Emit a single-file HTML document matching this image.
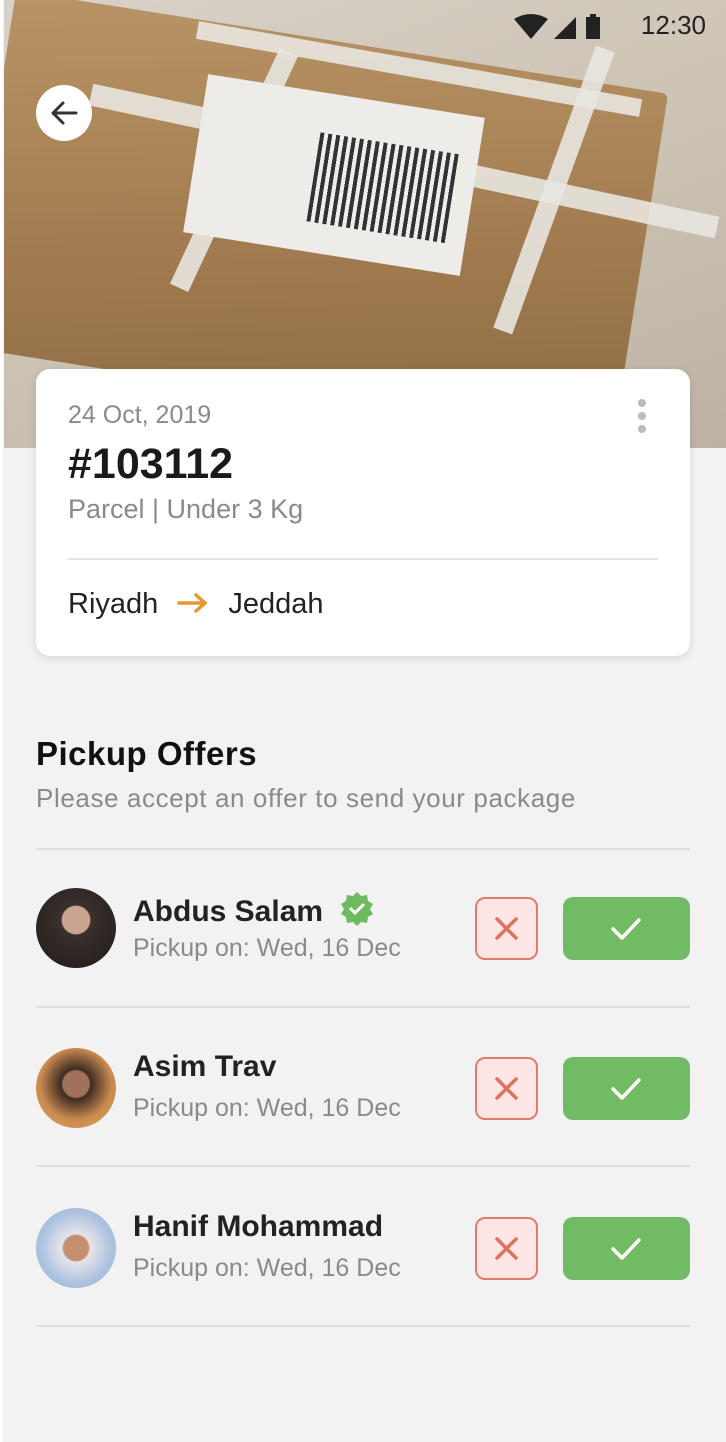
<!DOCTYPE html>
<html><head><meta charset="utf-8"><style>
*{margin:0;padding:0;box-sizing:border-box}
body{width:726px;height:1442px;background:#f2f2f2;font-family:"Liberation Sans",sans-serif;position:relative;overflow:hidden}
.photo{position:absolute;left:4px;top:0;width:722px;height:448px;background:linear-gradient(160deg,#d8d2c8 0%,#cfc6b8 40%,#bdb3a5 100%);overflow:hidden}
.box{position:absolute;left:-20px;top:40px;width:660px;height:360px;background:linear-gradient(170deg,#b89466,#a07a4e 60%,#8a6a45);transform:rotate(9deg);border-radius:6px}
.tape{position:absolute;background:#e8e6e0;opacity:.9}
.label{position:absolute;left:190px;top:95px;width:280px;height:160px;background:#eeece8;transform:rotate(9deg)}
.bars{position:absolute;left:120px;top:40px;width:140px;height:90px;background:repeating-linear-gradient(90deg,#333 0 4px,#eee 4px 8px)}
.back{position:absolute;left:36px;top:85px;width:56px;height:56px;border-radius:50%;background:#fff}
.status{position:absolute;right:20px;top:10px;color:#222;font-size:26px}
.card{position:absolute;left:36px;top:369px;width:654px;height:287px;background:#fff;border-radius:14px;box-shadow:0 2px 8px rgba(0,0,0,.12)}
.grey{color:#8a8a8a}
.row{position:absolute;left:36px;width:654px;height:80px}
.av{position:absolute;left:0;top:0;width:80px;height:80px;border-radius:50%}
.name{position:absolute;left:97px;top:2px;font-size:30px;font-weight:bold;color:#222}
.sub{position:absolute;left:97px;top:46px;font-size:25px;color:#8a8a8a}
.xb{position:absolute;left:439px;top:9px;width:63px;height:63px;border:2px solid #e27b6b;background:#fde6e3;border-radius:10px}
.cb{position:absolute;left:527px;top:9px;width:127px;height:63px;background:#71bb64;border-radius:10px}
.hr{position:absolute;left:36px;width:654px;height:2px;background:#dedede}
</style></head><body>
<div class="photo">
 <div class="box"></div>
 <div class="tape" style="left:80px;top:150px;width:640px;height:22px;transform:rotate(12deg)"></div>
 <div class="tape" style="left:190px;top:60px;width:450px;height:18px;transform:rotate(10deg)"></div>
 <div class="tape" style="left:400px;top:180px;width:300px;height:20px;transform:rotate(-70deg)"></div>
 <div class="tape" style="left:100px;top:160px;width:260px;height:20px;transform:rotate(-65deg)"></div>
 <div class="label"><div class="bars"></div></div>
</div>
<div class="back"><svg width="56" height="56" viewBox="0 0 56 56"><path d="M40 28H17M27 18L17 28L27 38" stroke="#333" stroke-width="3" fill="none" stroke-linecap="round" stroke-linejoin="round"/></svg></div>
<div class="status"><svg width="120" height="28" viewBox="0 0 120 28" style="vertical-align:middle"><path d="M0 6Q17 -4 34 6L17 26Z" fill="#222"/><path d="M40 26L62 4V26Z" fill="#222"/><rect x="72" y="4" width="14" height="22" fill="#222"/><rect x="76" y="1" width="6" height="4" fill="#222"/></svg> 12:30</div>
<div class="card">
 <div class="grey" style="position:absolute;left:32px;top:32px;font-size:25px">24 Oct, 2019</div>
 <div style="position:absolute;right:44px;top:30px;width:8px">
  <div style="width:8px;height:8px;border-radius:50%;background:#bbb;margin-bottom:5px"></div><div style="width:8px;height:8px;border-radius:50%;background:#bbb;margin-bottom:5px"></div><div style="width:8px;height:8px;border-radius:50%;background:#bbb"></div></div>
 <div style="position:absolute;left:32px;top:71px;font-size:43px;font-weight:bold;color:#1a1a1a">#103112</div>
 <div class="grey" style="position:absolute;left:32px;top:125px;font-size:27px">Parcel | Under 3 Kg</div>
 <div style="position:absolute;left:32px;top:189px;width:590px;height:2px;background:#e4e4e4"></div>
 <div style="position:absolute;left:32px;top:219px;font-size:29px;color:#222">Riyadh <svg width="34" height="24" viewBox="0 0 34 24" style="margin:0 10px;vertical-align:-2px"><path d="M3 12H29M20 4L29 12L20 20" stroke="#e8962f" stroke-width="3.5" fill="none" stroke-linecap="round"/></svg> Jeddah</div>
</div>
<div style="position:absolute;left:36px;top:735px;font-size:33px;font-weight:bold;color:#111;letter-spacing:0.5px">Pickup Offers</div>
<div class="grey" style="position:absolute;left:36px;top:783px;font-size:26px;letter-spacing:0.6px">Please accept an offer to send your package</div>
<div class="hr" style="top:848px"></div>
<div class="hr" style="top:1006px"></div>
<div class="hr" style="top:1165px"></div>
<div class="hr" style="top:1325px"></div>

<div class="row" style="top:888px">
 <div class="av" style="background:radial-gradient(circle at 50% 40%,#c9a48f 0 22%,#3a302c 24%,#1e1a18)"></div>
 <div class="name">Abdus Salam <svg width="36" height="36" viewBox="0 0 36 36" style="vertical-align:-5px;margin-left:8px"><path d="M18 2l4 4 6-1 1 6 5 3-3 5 3 5-5 3-1 6-6-1-4 4-4-4-6 1-1-6-5-3 3-5-3-5 5-3 1-6 6 1z" fill="#6cbb5e"/><path d="M11 18l5 5 9-9" stroke="#fff" stroke-width="3" fill="none"/></svg></div>
 <div class="sub">Pickup on: Wed, 16 Dec</div>
 <div class="xb"><svg width="59" height="59" viewBox="0 0 59 59"><path d="M20 20L39 39M39 20L20 39" stroke="#e27060" stroke-width="3.5" stroke-linecap="round"/></svg></div>
 <div class="cb"><svg width="127" height="63" viewBox="0 0 127 63"><path d="M50 32l9 9 17-18" stroke="#fff" stroke-width="3.5" fill="none" stroke-linecap="round" stroke-linejoin="round"/></svg></div>
</div>
<div class="row" style="top:1048px">
 <div class="av" style="background:radial-gradient(circle at 50% 45%,#a0705a 0 22%,#3b2a22 25%,#c88a50 60%,#e2a860)"></div>
 <div class="name">Asim Trav</div>
 <div class="sub">Pickup on: Wed, 16 Dec</div>
 <div class="xb"><svg width="59" height="59" viewBox="0 0 59 59"><path d="M20 20L39 39M39 20L20 39" stroke="#e27060" stroke-width="3.5" stroke-linecap="round"/></svg></div>
 <div class="cb"><svg width="127" height="63" viewBox="0 0 127 63"><path d="M50 32l9 9 17-18" stroke="#fff" stroke-width="3.5" fill="none" stroke-linecap="round" stroke-linejoin="round"/></svg></div>
</div>
<div class="row" style="top:1208px">
 <div class="av" style="background:radial-gradient(circle at 50% 50%,#c58e6e 0 22%,#e8e4ea 25%,#b0c4e0 60%,#8fa9d8)"></div>
 <div class="name">Hanif Mohammad</div>
 <div class="sub">Pickup on: Wed, 16 Dec</div>
 <div class="xb"><svg width="59" height="59" viewBox="0 0 59 59"><path d="M20 20L39 39M39 20L20 39" stroke="#e27060" stroke-width="3.5" stroke-linecap="round"/></svg></div>
 <div class="cb"><svg width="127" height="63" viewBox="0 0 127 63"><path d="M50 32l9 9 17-18" stroke="#fff" stroke-width="3.5" fill="none" stroke-linecap="round" stroke-linejoin="round"/></svg></div>
</div>
<div style="position:absolute;left:0;top:0;width:3px;height:1442px;background:#fff"></div>
</body></html>
